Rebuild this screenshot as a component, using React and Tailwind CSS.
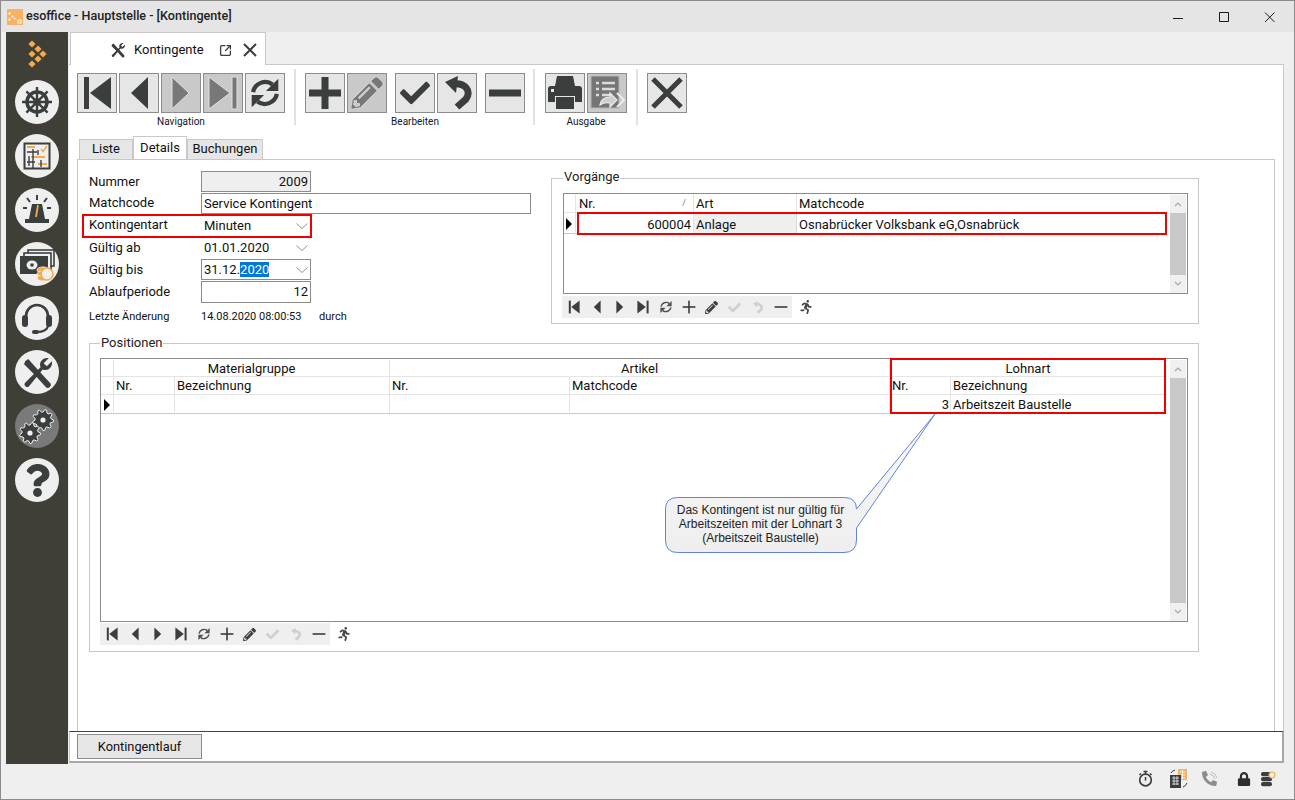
import React from "react";
import { FaCheck, FaPencilAlt, FaQuestion, FaRunning, FaLock, FaBuilding, FaPhone } from "react-icons/fa";
import { SquareArrowOutUpRight } from "lucide-react";

const DARK = "#3a3f3e";

function gearPath(cx, cy, r, teeth) {
  const pts = [];
  for (let i = 0; i < teeth * 4; i++) {
    const a = (i / (teeth * 4)) * Math.PI * 2;
    const rad = i % 4 < 2 ? r : r * 0.76;
    pts.push(`${(cx + Math.cos(a) * rad).toFixed(2)},${(cy + Math.sin(a) * rad).toFixed(2)}`);
  }
  return "M" + pts.join("L") + "Z";
}

const S = ({ size = 40, children, view = "0 0 40 40", style }) => (
  <svg width={size} height={size} viewBox={view} style={style} className="block shrink-0">{children}</svg>
);

const First = ({ size, c = DARK }) => (
  <S size={size}><rect x="7" y="4" width="5" height="32" fill={c} /><polygon points="13,20 34,4 34,36" fill={c} /></S>
);
const Prev = ({ size, c = DARK }) => <S size={size}><polygon points="12,20 29,4 29,36" fill={c} /></S>;
const Next = ({ size, c = DARK, o }) => <S size={size}><polygon points="11,4 28,20 11,36" fill={c} stroke={o} /></S>;
const Last = ({ size, c = DARK, o }) => (
  <S size={size}><polygon points="6,4 27,20 6,36" fill={c} stroke={o} /><rect x="29" y="4" width="5" height="32" fill={c} stroke={o} /></S>
);
const Sync = ({ size, c = DARK, w = 4.5 }) => (
  <S size={size}>
    <path d="M7.500 19 A13 13 0 0 1 28 11" fill="none" stroke={c} strokeWidth={w} />
    <polygon points="34,5 34,18 21,18" fill={c} />
    <path d="M32.500 21 A13 13 0 0 1 12 29" fill="none" stroke={c} strokeWidth={w} />
    <polygon points="6,22 19,22 6,35" fill={c} />
  </S>
);
const Plus = ({ size, t = 7, c = DARK }) => (
  <S size={size}><rect x="4" y={20 - t / 2} width="32" height={t} fill={c} /><rect x={20 - t / 2} y="4" width={t} height="32" fill={c} /></S>
);
const Minus = ({ size, t = 7, c = DARK }) => <S size={size}><rect x="4" y={20 - t / 2} width="32" height={t} fill={c} /></S>;
const Undo = ({ size, c = DARK }) => (
  <S size={size}>
    <path d="M15 11 C28 9 35 18 29 26 L20 34" fill="none" stroke={c} strokeWidth="7" />
    <polygon points="8,9 21,3 19,20" fill={c} />
  </S>
);
const Close = ({ size }) => (
  <S size={size}><path d="M6 6 L34 34 M34 6 L6 34" stroke={DARK} strokeWidth="5" fill="none" /></S>
);
const Printer = () => (
  <S size={40}>
    <polygon points="12,3 28,3 30,13 10,13" fill={DARK} />
    <path d="M3 16 a3 3 0 0 1 3 -3 H34 a3 3 0 0 1 3 3 V29 H3 Z" fill={DARK} />
    <rect x="6" y="16" width="3" height="3" fill="#e6e6e6" />
    <rect x="10.500" y="23.500" width="19" height="13" fill={DARK} stroke="#e6e6e6" />
  </S>
);
const Report = () => (
  <S size={40}>
    <rect x="4" y="3" width="28" height="32" fill="#757575" stroke="#b5b5b5" />
    <path d="M9 10h3M15 10h13M9 16h3M15 16h13M9 22h3M15 22h9" stroke="#dcdcdc" strokeWidth="2.5" fill="none" />
    <path d="M13 32 q1 -8 10 -8 v-4 l7 7 -7 7 v-4 q-6 -1 -10 2z" fill="#cfcfcf" stroke="#ececec" strokeWidth="1.2" />
    <path d="M30 20 l7 7 -7 7" fill="none" stroke="#ececec" strokeWidth="2" />
  </S>
);

const Tools = ({ size = 16, c = DARK }) => (
  <S size={size} view="0 0 32 32">
    <path d="M4 5 L7 3 L17 14 L28 26 a2.500 2.500 0 0 1 -4 4 L13 18 L3 8 Z" fill={c} />
    <path d="M5 25 L19 11 C17 6 21 1 27 2 L22 7 L25 10 L30 5 C31 11 26 15 21 13 L8 29 a2 2 0 0 1 -4 -3 Z" fill={c} />
  </S>
);

const Btn = ({ children, off }) => (
  <div className={`w-[40px] h-[40px] border border-[#8c8c8c] flex items-center justify-center box-border ${off ? "bg-[#c9c9c9]" : "bg-[#e6e6e6]"}`}>
    {children}
  </div>
);
const Divider = () => <div className="w-[2px] h-[56px] bg-[#e2e2e2] self-start mt-[-4px]" />;
const Group = ({ label, children }) => (
  <div className="flex flex-col items-center">
    <div className="flex">{children}</div>
    {label && <div className="text-[10px] leading-[12px] mt-[3px] text-[#10182a]">{label}</div>}
  </div>
);

const MiniBar = () => {
  const Cell = ({ children }) => <div className="w-[23px] h-[22px] flex items-center justify-center">{children}</div>;
  return (
    <div className="flex items-center">
      <div className="flex bg-[#efefef] w-[230px] h-[22px]">
        <Cell><First size={16} /></Cell>
        <Cell><Prev size={16} /></Cell>
        <Cell><Next size={16} /></Cell>
        <Cell><Last size={16} /></Cell>
        <Cell><Sync size={16} c="#4b5050" w={3.5} /></Cell>
        <Cell><Plus size={16} t={4} /></Cell>
        <Cell><FaPencilAlt size={13} color={DARK} /></Cell>
        <Cell><FaCheck size={13} color="#cfcfcf" /></Cell>
        <Cell><Undo size={15} c="#cfcfcf" /></Cell>
        <Cell><Minus size={16} t={4} /></Cell>
      </div>
      <div className="ml-[6px] w-[16px] flex justify-center"><FaRunning size={14} color="#454a49" /></div>
    </div>
  );
};

const Chevron = ({ up, c = "#a8a8a8", w = 8 }) => (
  <svg width={w} height="6" viewBox="0 0 8 6" className="block">
    <path d={up ? "M1 5 L4 2 L7 5" : "M1 1 L4 4 L7 1"} fill="none" stroke={c} strokeWidth="1.2" />
  </svg>
);

const Scroll = ({ cap = 18 }) => (
  <div className="w-[16px] flex flex-col bg-[#f0f0f0] mt-[1px]">
    <div className="flex items-center justify-center" style={{ height: cap }}><Chevron up /></div>
    <div className="flex-1 bg-[#c8c8c8]" />
    <div className="flex items-center justify-center" style={{ height: cap }}><Chevron /></div>
  </div>
);

const Indicator = () => (
  <div className="w-0 h-0 border-y-[6px] border-y-transparent border-l-[6px] border-l-black" />
);

const Field = ({ label, lift, width = "w-[110px]", border = true, bg = "bg-white", right, select, h = "h-[21px]", children }) => (
  <div className="flex h-[22px] items-start">
    <div className={`w-[112px] ${lift ? "leading-[20px]" : "leading-[22px]"}`}>{label}</div>
    <div className={`${width} ${h} box-border border ${border ? "border-[#8c8c8c]" : "border-transparent"} ${bg} flex items-center px-[2px] ${right ? "justify-end" : "justify-between"}`}>
      <span className="leading-[18px]">{children}</span>
      {select && (
        <svg width="12" height="6" viewBox="0 0 12 6" className="block">
          <path d="M0.5 0.5 L6 5.5 L11.5 0.5" fill="none" stroke="#909090" />
        </svg>
      )}
    </div>
  </div>
);

const Legend = ({ children, className }) => (
  <div className={`absolute bg-white px-[1px] leading-[16px] text-[#222] ${className}`}>{children}</div>
);

const SideIcon = ({ dark, children }) => (
  <div className={`w-[44px] h-[44px] rounded-full flex items-center justify-center ${dark ? "bg-[#7a7a7a]" : "bg-[#efefef]"}`}>{children}</div>
);

const Helm = () => (
  <S size={34} view="0 0 34 34">
    <circle cx="17" cy="17" r="10" fill="none" stroke={DARK} strokeWidth="3.5" />
    <path d="M17 2V32M2 17H32M6.400 6.400L27.600 27.600M27.600 6.400L6.400 27.600" stroke={DARK} strokeWidth="2.4" />
    <circle cx="17" cy="17" r="3.8" fill={DARK} />
  </S>
);
const Planner = () => (
  <S size={28} view="0 0 28 28">
    <rect x="1.500" y="1.500" width="25" height="25" fill="#efefef" stroke={DARK} strokeWidth="2" />
    <path d="M4 5H12M8 15H22M15 22H24" stroke="#f5a94a" strokeWidth="2" />
    <path d="M4 10H14M4 20H12M10 7V26M15 8V13M6 24V14M18 18V25" stroke={DARK} strokeWidth="1.4" fill="none" />
    <path d="M18 7 L20 9.500 L24 4" stroke="#f5a94a" strokeWidth="1.6" fill="none" />
  </S>
);
const Beacon = () => (
  <S size={36} view="0 0 36 36">
    <path d="M13 12 L23 12 L26 27 H10 Z" fill={DARK} />
    <rect x="6" y="27" width="24" height="4" fill={DARK} />
    <path d="M17 25 L19 13" stroke="#f5a94a" strokeWidth="1.8" />
    <path d="M18 3V8M8 6L11 10M28 6L25 10M4 16H8M28 16H32" stroke={DARK} strokeWidth="2" />
  </S>
);
const Money = () => (
  <S size={36} view="0 0 36 36">
    <rect x="9" y="4" width="26" height="16" fill="#efefef" stroke={DARK} strokeWidth="1.6" />
    <rect x="5" y="7" width="27" height="17" fill="#efefef" stroke={DARK} strokeWidth="1.6" />
    <rect x="1" y="10" width="28" height="18" fill={DARK} />
    <ellipse cx="13" cy="19" rx="5.500" ry="4.500" fill="#efefef" />
    <circle cx="13" cy="19" r="1.800" fill={DARK} />
    <ellipse cx="24" cy="24" rx="6" ry="3" fill="#f5a94a" stroke="#efefef" />
    <ellipse cx="24" cy="28" rx="6" ry="3" fill="#f5a94a" stroke="#efefef" />
    <ellipse cx="24" cy="32" rx="6" ry="3" fill="#f5a94a" stroke="#efefef" />
    <circle cx="28" cy="28" r="6" fill="#efefef" stroke="#f5a94a" strokeWidth="1.6" />
  </S>
);
const Headset = () => (
  <S size={34} view="0 0 34 34">
    <path d="M6 20 V15 a11 11 0 0 1 22 0 V20" fill="none" stroke={DARK} strokeWidth="2.6" />
    <rect x="2" y="14" width="6" height="12" rx="3" fill={DARK} />
    <rect x="26" y="14" width="6" height="12" rx="3" fill={DARK} />
    <path d="M28 25 C27 30 23 31 17 31" fill="none" stroke={DARK} strokeWidth="2.2" />
    <rect x="12" y="29" width="7" height="4" rx="2" fill={DARK} />
  </S>
);
const Gears = () => (
  <S size={36} view="0 0 36 36">
    <path d={gearPath(24, 12, 10.5, 9)} fill={DARK} stroke="#f0f0f0" strokeWidth="1" />
    <circle cx="24" cy="12" r="2.600" fill="#f0f0f0" />
    <path d={gearPath(11, 25, 10.5, 9)} fill={DARK} stroke="#f0f0f0" strokeWidth="1" />
    <circle cx="11" cy="25" r="2.600" fill="#f0f0f0" />
  </S>
);

const Logo = () => (
  <svg width="24" height="32" viewBox="0 0 24 32" className="block">
    {[[7, 4], [13, 9], [7, 14], [18, 14], [13, 19], [7, 24]].map(([x, y], i) => (
      <polygon key={i} points={`${x},${y - 3.6} ${x + 3.6},${y} ${x},${y + 3.6} ${x - 3.6},${y}`} fill="#f5a94a" />
    ))}
  </svg>
);

const Stopwatch = () => (
  <S size={17} view="0 0 17 17">
    <circle cx="8.500" cy="10" r="5.800" fill="none" stroke={DARK} strokeWidth="1.7" />
    <path d="M6.500 1.500H10.500M8.500 1.500V4M8.500 7V10.500M13 3.500L14.500 5M4 3.500L2.500 5" stroke={DARK} strokeWidth="1.5" />
  </S>
);
const Building = () => (
  <svg width="19" height="20" viewBox="0 0 19 20" className="block">
    <rect x="9" y="0" width="9" height="11" fill="#f9b264" />
    <path d="M11 3h5M11 6h5M11 9h5M13.500 1v9" stroke="#fff" strokeWidth="0.8" />
    <rect x="1" y="6" width="11" height="13" fill={DARK} />
    <path d="M3 9h7M3 12h7M3 15h7M5 7v9M8 7v9" stroke="#efefef" strokeWidth="0.8" />
    <path d="M2 4 q1.500 -2.500 4 -3M18 14 q-1 3 -4 4" fill="none" stroke={DARK} strokeWidth="1" />
  </svg>
);
const PhoneIcon = () => (
  <div className="relative w-[16px] h-[16px]">
    <FaPhone size={15} color="#8c8c8c" style={{ transform: "scaleX(-1)" }} />
    <svg width="16" height="16" viewBox="0 0 16 16" className="absolute top-0 left-0">
      <path d="M8 3 q4 1 5 5M9 1 q5 1 6 6" fill="none" stroke="#b0b0b0" strokeWidth="0.8" />
    </svg>
  </div>
);
const Db = () => (
  <svg width="15" height="16" viewBox="0 0 15 16" className="block">
    <rect x="0" y="1" width="11" height="4.200" rx="2" fill={DARK} />
    <rect x="0" y="6" width="11" height="4.200" rx="2" fill={DARK} />
    <rect x="0" y="11" width="11" height="4.200" rx="2" fill={DARK} />
    <circle cx="11" cy="4" r="3" fill="#efefef" stroke="#f5a94a" strokeWidth="1.2" />
  </svg>
);

const TabHead = ({ active, w, children }) => (
  <div className={`box-border flex items-center justify-center border border-[#c8c8c8] ${w} ${active ? "h-[23px] bg-white border-b-0 relative z-10" : "h-[20px] bg-[#e6e6e6] border-b-0 pb-[2px]"}`}>
    {children}
  </div>
);

const Red = ({ className }) => <div className={`absolute border-2 border-[#f00000] box-border pointer-events-none z-20 ${className}`} />;

export default function App() {
  return (
    <div className="w-[1295px] h-[800px] box-border border border-[#8c8c8c] bg-[#efefef] flex flex-col font-[Roboto,sans-serif] text-[13px] text-[#111] overflow-hidden">
      {/* Title bar */}
      <div className="h-[31px] shrink-0 bg-[#e5e5e5] flex items-center">
        <svg width="16" height="16" viewBox="0 0 16 16" className="block ml-[6px] mr-[3px]">
          <rect width="16" height="16" fill="#f9b264" />
          <path d="M2.500 3l1.500 1.500-1.500 1.500-1.200-1.500zM5.500 6l1.500 1.500-1.500 1.500-1.500-1.500zM2.500 9l1.500 1.500-1.500 1.500-1.200-1.500zM8 8.500l1 1-1 1-1-1z" fill="#fff" />
          <rect x="11" y="11" width="3" height="3" fill="none" stroke="#fff" />
        </svg>
        <div className="text-[12.6px] font-medium text-[#222] flex-1">esoffice - Hauptstelle - [Kontingente]</div>
        <svg width="115" height="14" viewBox="0 0 115 14" className="block mr-[9px]">
          <path d="M3 8.500H13M49.500 2.500H58.500V11.500H49.500ZM95 2.500L104.500 12M104.500 2.500L95 12" stroke="#1a1a1a" fill="none" />
        </svg>
      </div>

      <div className="h-[732px] shrink-0 flex">
        {/* Sidebar */}
        <div className="w-[62px] ml-[5px] bg-[#3f3f38] flex flex-col items-center pt-[8px] gap-[10px]">
          <div className="h-[30px]"><Logo /></div>
          <SideIcon><Helm /></SideIcon>
          <SideIcon><Planner /></SideIcon>
          <SideIcon><Beacon /></SideIcon>
          <SideIcon><Money /></SideIcon>
          <SideIcon><Headset /></SideIcon>
          <SideIcon><Tools size={33} /></SideIcon>
          <SideIcon dark><Gears /></SideIcon>
          <SideIcon><FaQuestion size={33} color={DARK} /></SideIcon>
        </div>

        {/* Main */}
        <div className="w-[1215px] ml-[1px] flex flex-col">
          <div className="h-[32px] shrink-0 pl-[1px] flex items-end relative z-10">
            <div className="w-[196px] h-[33px] mb-[-1px] pt-[2px] box-border bg-white border border-b-0 border-[#c8c8c8] flex items-center">
              <div className="ml-[39px]"><Tools size={16} /></div>
              <div className="ml-[8px] w-[85px]">Kontingente</div>
              <SquareArrowOutUpRight size={13} color={DARK} strokeWidth={2.4} />
              <svg width="14" height="14" viewBox="0 0 14 14" className="block ml-[11px]">
                <path d="M1 1L13 13M13 1L1 13" stroke={DARK} strokeWidth="2" />
              </svg>
            </div>
          </div>

          <div className="h-[667px] shrink-0 bg-white border-t border-r border-[#c8c8c8] box-border flex flex-col px-[8px]">
            {/* Toolbar */}
            <div className="h-[72px] shrink-0 pt-[8px] flex">
              <Group label="Navigation">
                <div className="flex gap-[2px]">
                  <Btn><First /></Btn>
                  <Btn><Prev /></Btn>
                  <Btn off><Next c="#787878" o="#e0e0e0" /></Btn>
                  <Btn off><Last c="#787878" o="#e0e0e0" /></Btn>
                  <Btn><Sync size={38} /></Btn>
                </div>
              </Group>
              <div className="w-[9px]" />
              <Divider />
              <div className="w-[9px]" />
              <Group label="Bearbeiten">
                <div className="flex gap-[2px]">
                  <Btn><Plus /></Btn>
                  <Btn off><FaPencilAlt size={32} color="#787878" stroke="#e0e0e0" strokeWidth={12} /></Btn>
                </div>
                <div className="flex gap-[2px] ml-[8px]">
                  <Btn><FaCheck size={30} color={DARK} /></Btn>
                  <Btn><Undo /></Btn>
                </div>
                <div className="ml-[8px]"><Btn><Minus /></Btn></div>
              </Group>
              <div className="w-[8px]" />
              <Divider />
              <div className="w-[10px]" />
              <Group label="Ausgabe">
                <div className="flex gap-[2px]">
                  <Btn><Printer /></Btn>
                  <Btn off><Report /></Btn>
                </div>
              </Group>
              <div className="w-[9px]" />
              <Divider />
              <div className="w-[9px]" />
              <Btn><Close /></Btn>
            </div>

            {/* Tabs */}
            <div className="h-[22px] shrink-0 flex items-end pl-[2px] relative">
              <TabHead w="w-[54px]">Liste</TabHead>
              <TabHead active w="w-[54px]"><span className="mt-[-1px]">Details</span></TabHead>
              <TabHead w="w-[76px]">Buchungen</TabHead>
            </div>

            {/* Page */}
            <div className="flex-1 box-border border border-b-0 border-[#c8c8c8] w-[1198px] pt-[11px] pl-[11px]">
              <div className="flex h-[153px]">
                <div className="w-[462px] relative">
                  <Field label="Nummer" bg="bg-[#efefef]" right>2009</Field>
                  <Field label="Matchcode" lift width="w-[330px]">Service Kontingent</Field>
                  <div className="relative">
                    <Field label="Kontingentart" lift border={false} select>Minuten</Field>
                    <Red className="left-[-7px] top-[-1px] w-[230px] h-[24px]" />
                  </div>
                  <Field label="Gültig ab" border={false} select>01.01.2020</Field>
                  <Field label="Gültig bis" select>31.12.<span className="bg-[#0078d7] text-white">2020</span></Field>
                  <Field label="Ablaufperiode" right h="h-[22px]">12</Field>
                  <div className="flex mt-[7px] text-[11px] leading-[14px]">
                    <div className="w-[112px]">Letzte Änderung</div>
                    <div className="w-[118px]">14.08.2020 08:00:53</div>
                    <div>durch</div>
                  </div>
                </div>
                {/* Vorgänge */}
                <div className="relative mt-[7px] w-[648px] h-[146px] box-border border border-[#c8c8c8] pt-[14px] pl-[11px]">
                  <Legend className="top-[-10px] left-[11px]">Vorgänge</Legend>
                  <div className="w-[625px] h-[101px] box-border border border-[#8c8c8c] flex">
                    <div className="w-[603px] relative">
                      <div className="grid grid-cols-[12px_118px_103px_370px] h-[19px] border-b border-[#e4e4e4] box-border">
                        <div className="border-r border-[#e4e4e4]" />
                        <div className="border-r border-[#e4e4e4] pl-[3px] pr-[7px] flex justify-between items-center"><span>Nr.</span><span className="text-[9px] text-[#777]">/</span></div>
                        <div className="border-r border-[#e4e4e4] px-[2px] flex items-center">Art</div>
                        <div className="px-[2px] flex items-center">Matchcode</div>
                      </div>
                      <div className="grid grid-cols-[12px_118px_103px_370px] h-[21px] border-b border-[#c8c8c8] box-border">
                        <div className="border-r border-[#e4e4e4] flex items-center justify-end pr-[3px]"><Indicator /></div>
                        <div className="border-r border-[#e4e4e4] px-[2px] pt-[2px] flex items-center justify-end">600004</div>
                        <div className="border-r border-[#d8d8d8] px-[2px] pt-[2px] bg-[#efefef] flex items-center">Anlage</div>
                        <div className="px-[2px] pt-[2px] flex items-center">Osnabrücker Volksbank eG,Osnabrück</div>
                      </div>
                      <Red className="left-[13px] top-[18px] w-[590px] h-[23px]" />
                    </div>
                    <div className="w-[3px]" />
                    <Scroll cap={18} />
                  </div>
                  <div className="mt-[2px] ml-[-1px]"><MiniBar /></div>
                </div>
              </div>

              {/* Positionen */}
              <div className="relative mt-[19px] w-[1110px] h-[309px] box-border border border-[#c8c8c8] pt-[14px] pl-[10px]">
                <Legend className="top-[-9px] left-[10px]">Positionen</Legend>
                <div className="relative w-[1088px] h-[264px] box-border border border-[#8c8c8c] flex">
                  <div className="w-[1066px] relative">
                    <div className="grid grid-cols-[13px_276px_500px_276px] h-[18px] border-b border-[#e4e4e4] box-border pt-[1px]">
                      <div className="border-r border-[#e4e4e4]" />
                      <div className="border-r border-[#e4e4e4] text-center leading-[17px]">Materialgruppe</div>
                      <div className="border-r border-[#e4e4e4] text-center leading-[17px]">Artikel</div>
                      <div className="text-center leading-[17px]">Lohnart</div>
                    </div>
                    <div className="grid grid-cols-[13px_61px_215px_180px_320px_61px_215px] h-[18px] border-b border-[#e4e4e4] box-border leading-[17px]">
                      <div className="border-r border-[#e4e4e4]" />
                      <div className="border-r border-[#e4e4e4] px-[2px]">Nr.</div>
                      <div className="border-r border-[#e4e4e4] px-[2px]">Bezeichnung</div>
                      <div className="border-r border-[#e4e4e4] px-[2px]">Nr.</div>
                      <div className="border-r border-[#e4e4e4] px-[2px]">Matchcode</div>
                      <div className="border-r border-[#e4e4e4] px-[2px]">Nr.</div>
                      <div className="px-[2px]">Bezeichnung</div>
                    </div>
                    <div className="grid grid-cols-[13px_61px_215px_180px_320px_61px_215px] h-[19px] border-b border-[#c8c8c8] box-border">
                      <div className="border-r border-[#e4e4e4] flex items-center justify-center"><Indicator /></div>
                      <div className="border-r border-[#e4e4e4]" />
                      <div className="border-r border-[#e4e4e4]" />
                      <div className="border-r border-[#e4e4e4]" />
                      <div className="border-r border-[#e4e4e4]" />
                      <div className="border-r border-[#e4e4e4] px-[1px] flex items-center justify-end">3</div>
                      <div className="px-[2px] flex items-center">Arbeitszeit Baustelle</div>
                    </div>
                    <Red className="left-[789px] top-[-1px] w-[276px] h-[56px]" />
                  </div>
                  <div className="w-[3px]" />
                  <Scroll cap={18} />

                  {/* Callout */}
                  <svg width="285" height="146" viewBox="0 0 285 146" className="absolute left-[559px] top-[51px] z-10">
                    <defs>
                      <linearGradient id="cg" x1="0" y1="0" x2="0" y2="1">
                        <stop offset="0" stopColor="#fafafa" />
                        <stop offset="1" stopColor="#eeeeee" />
                      </linearGradient>
                    </defs>
                    <path d="M17.500 87.500H184 Q196.500 87.500 196.500 99 L275 4 L196.500 118 V130 Q196.500 142.500 184 142.500 H17.500 Q5.500 142.500 5.500 130 V99 Q5.500 87.500 17.500 87.500Z" fill="url(#cg)" stroke="#5f82e2" />
                  </svg>
                  <div className="absolute left-[564px] top-[144px] w-[191px] z-10 text-center text-[12px] leading-[14px] font-['Liberation_Sans',Arial,sans-serif] text-[#222]">
                    Das Kontingent ist nur gültig für<br />Arbeitszeiten mit der Lohnart 3<br />(Arbeitszeit Baustelle)
                  </div>
                </div>
                <div className="mt-[1px]"><MiniBar /></div>
              </div>
            </div>
          </div>

          {/* Bottom action bar */}
          <div className="h-[32px] shrink-0 bg-white box-border border-t border-t-[#404040] border-b-2 border-b-[#a8a8a8] border-r-2 border-r-[#a8a8a8] border-l border-l-[#c8c8c8] pl-[7px] pt-[2px]">
            <div className="w-[125px] h-[25px] box-border bg-[#e6e6e6] border border-[#8c8c8c] flex items-center justify-center text-[12.8px]">Kontingentlauf</div>
          </div>
        </div>
      </div>

      {/* Status bar */}
      <div className="flex-1 flex items-center justify-end pr-[18px] pb-[6px]">
        <Stopwatch />
        <div className="w-[15px]" />
        <Building />
        <div className="w-[14px]" />
        <PhoneIcon />
        <div className="w-[19px]" />
        <FaLock size={14} color="#2c2f2f" />
        <div className="w-[10px]" />
        <Db />
      </div>
    </div>
  );
}
